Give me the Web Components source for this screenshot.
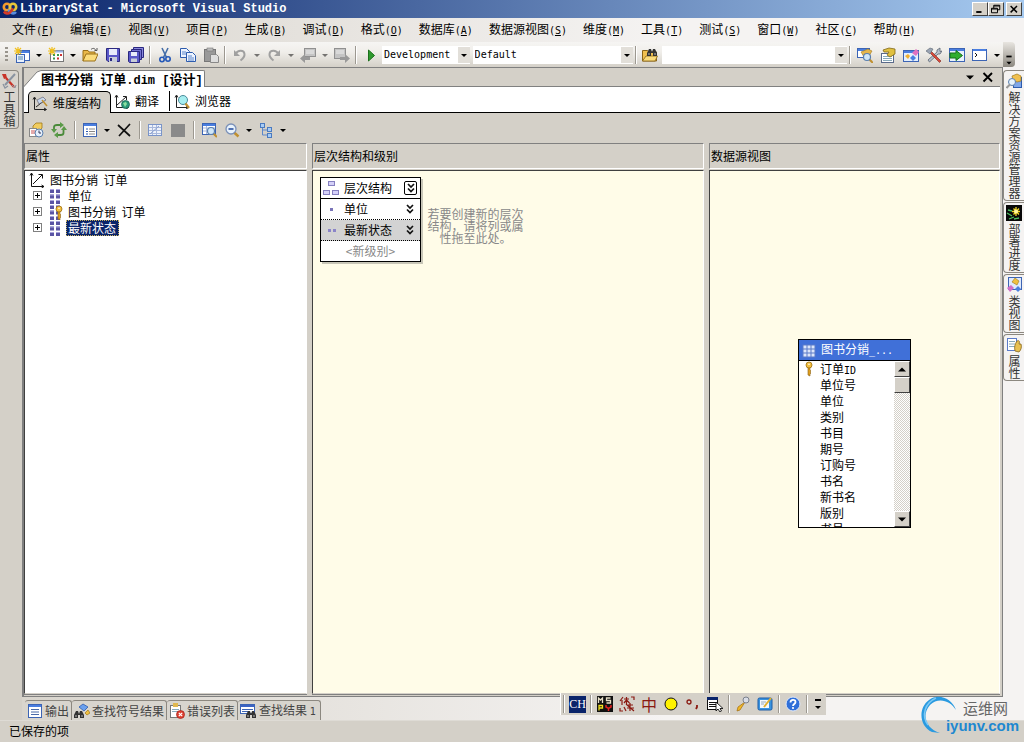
<!DOCTYPE html>
<html lang="zh-CN">
<head>
<meta charset="utf-8">
<title>LibraryStat - Microsoft Visual Studio</title>
<style>
html, body { margin: 0; height: 100%; }
body { font: 12px/16px "Noto Sans CJK SC", sans-serif; color: #000; overflow: hidden; }
</style>
</head>
<body>
<vs-app></vs-app>
<script>
const BASE = `
*{box-sizing:border-box}
[hidden]{display:none}
button,select,input{font:inherit;color:inherit;border:0;padding:0;margin:0;background:none;border-radius:0;outline:0}
a{color:inherit;text-decoration:none}
ul,h1,h2,p{margin:0;padding:0;font:inherit;list-style:none}
.l{font-family:"DejaVu Sans Mono",monospace;font-size:10px}
vs-icon{flex:none}`;

function define(name, css, html, after) {
  const tpl = document.createElement('template');
  tpl.innerHTML = `<style>${BASE}${css}</style>${html}`;
  customElements.define(name, class extends HTMLElement {
    connectedCallback() {
      if (this.shadowRoot) return;
      const root = this.attachShadow({ mode: 'open' });
      root.append(tpl.content.cloneNode(true));
      if (after) after(this, root);
    }
  });
}

const squares = (c) => [1, 6.5, 12].map(y => [3, 9].map(x =>
  `<rect x="${x}" y="${y}" width="4" height="4" fill="${c}"/><path d="M${x} ${y + .5}h4" stroke="#a9a4dc"/>`).join('')).join('');
const axes = '<path d="M2.500 3v11.500H14M1 4.500 2.500 2 4 4.500M12 13l2.500 1.500L12 16" fill="none" stroke="#222"/>';
const sun = '<path d="M4 0v8M0 4h8M1 1l6 6M7 1 1 7" stroke="#f0c020" stroke-width="1.200"/>';
const lens = (x, y, f = '#cfe6f8') => `<path d="M${x + 2.500} ${y + 2.500}l3.500 3.500" stroke="#c09030" stroke-width="2.200"/><circle cx="${x}" cy="${y}" r="3.500" fill="${f}" stroke="#5a7fae" stroke-width="1.200"/>`;
const binoc = (x, y) => `<path d="M${x} ${y + 7}v-3l2-4h2l1 3 1-3h2l2 4v3h-4v-3h-2v3z" fill="#333"/><path d="M${x + 1} ${y + 5}h2M${x + 7} ${y + 5}h2" stroke="#bbb"/>`;
const win = (x, y, w, h) => `<rect x="${x + .5}" y="${y + .5}" width="${w}" height="${h}" fill="#fff" stroke="#3c64b4"/><rect x="${x + 1}" y="${y + 1}" width="${w - 1}" height="2" fill="#4a7ee0"/>`;
const key = (x, y) => `<path d="M${x} ${y + 3}v9l2 1v-2l1-1-1-1 1-1-1-1v-3z" fill="#e0a020" stroke="#8a6010" stroke-width=".6"/><circle cx="${x + 1}" cy="${y + 2}" r="3" fill="#f2c040" stroke="#a07010" stroke-width=".8"/><circle cx="${x + 1}" cy="${y + 1.300}" r=".8" fill="#fff"/>`;

const ICONS = {
  logo: '<circle cx="5" cy="6" r="3.200" fill="none" stroke="#f39a2d" stroke-width="2.600"/><circle cx="11" cy="6" r="3.200" fill="none" stroke="#e8c63a" stroke-width="2.600"/><path d="M7 8.500a4 4 0 0 0 7 2.500" fill="none" stroke="#5a8de0" stroke-width="2.600"/><path d="M2 10.500a4 4 0 0 0 6 1l3-4" fill="none" stroke="#d43a2a" stroke-width="2.600"/>',
  newproject: win(4, 3, 11, 10) + '<rect x="2.500" y="7.500" width="8" height="8" fill="#e8f0fc" stroke="#3c64b4"/><path d="M4 10h5M4 12h5" stroke="#58a"/>' + sun,
  newitem: '<rect x="2.500" y="3.500" width="13" height="11" fill="#fff" stroke="#777"/><path d="M3 4.500h12" stroke="#9ab4e8" stroke-width="2"/><path d="M5 8h2M9 8h2M5 11.500h2" stroke="#3a9a4a" stroke-width="2"/><path d="M12 8h2M9 11.500h2" stroke="#c33" stroke-width="2"/>' + sun,
  open: '<path d="M1 14V3.500h5l1 1.500h6V7" fill="#e9b84a" stroke="#9a7018"/><path d="M1 14 4 7h12l-3 7z" fill="#fbdc7c" stroke="#9a7018"/><path d="M9 2.500c2-2 4-1 5 1M12.500 3.500H15V1" fill="none" stroke="#555"/>',
  save: '<path d="M1.500 1.500h13v13H3L1.500 13z" fill="#5a58c8" stroke="#2a2880"/><rect x="4" y="2" width="8" height="6" fill="#e8ecfa"/><rect x="4" y="10" width="8" height="5" fill="#c8cdd8"/><rect x="5" y="11" width="2" height="3" fill="#2a2880"/>',
  saveall: '<path d="M5.500 .5h10v10h-10z" fill="#8a88dc" stroke="#2a2880"/><path d="M3.500 2.500h10v10h-10z" fill="#7472d2" stroke="#2a2880"/><path d="M.5 4.500h11v11H1.500l-1-1z" fill="#5a58c8" stroke="#2a2880"/><rect x="3" y="5" width="6" height="4" fill="#e8ecfa"/><rect x="3" y="11.500" width="6" height="3.500" fill="#c8cdd8"/>',
  cut: '<path d="M5 1l4.500 9.500M11 1 6.500 10.500" stroke="#456ea8" stroke-width="1.600"/><circle cx="5" cy="12.500" r="2.200" fill="none" stroke="#2458b8" stroke-width="1.600"/><circle cx="11" cy="12" r="2.200" fill="none" stroke="#2458b8" stroke-width="1.600"/>',
  copy: '<path d="M.5 1.500h6l3 3v6h-9z" fill="#eef4ff" stroke="#2d5cae"/><path d="M2 5h4M2 7h4" stroke="#5a86cc"/><path d="M6.500 5.500h6l3 3v6h-9z" fill="#eef4ff" stroke="#2d5cae"/><path d="M8 9h4M8 11h6M8 13h6" stroke="#5a86cc"/>',
  paste: '<rect x="1.500" y="2.500" width="11" height="12" fill="#999" stroke="#777"/><rect x="4" y="1" width="6" height="3" fill="#bbb" stroke="#777" stroke-width=".6"/><path d="M7.500 7.500h6l2 2v6h-8z" fill="#ddd" stroke="#888"/>',
  undo: '<path d="M3.500 7C6 2.500 12 3 12.500 7c.3 3-2 5-4 6.500" fill="none" stroke="#a0a0a0" stroke-width="2"/><path d="M2 3v6h6z" fill="#a0a0a0"/>',
  redo: '<path d="M12.500 7C10 2.500 4 3 3.500 7c-.3 3 2 5 4 6.500" fill="none" stroke="#a0a0a0" stroke-width="2"/><path d="M14 3v6H8z" fill="#a0a0a0"/>',
  navback: '<rect x="4.500" y="1.500" width="11" height="8" fill="#c4c4c4" stroke="#909090"/><path d="M6 4h8M6 6h8" stroke="#eee"/><path d="M0 11.500 5 7v3h5v3H5v3z" fill="#999"/>',
  navfwd: '<rect x=".5" y="1.500" width="11" height="10" fill="#c4c4c4" stroke="#909090"/><path d="M2 4h8M2 6h8" stroke="#eee"/><path d="M16 11.500 11 7v3H6v3h5v3z" fill="#999"/>',
  play: '<path d="M5.500 3v11l6-5.500z" fill="#2f9a2f" stroke="#1c701c"/>',
  findfile: '<path d="M.5 14V3.500h5L7 5h7.500v9z" fill="#f0c050" stroke="#8a6418"/>' + '<path d="M.5 14 4 9h11.500L13 14z" fill="#fbdc7c" stroke="#8a6418" stroke-width=".8"/>' + binoc(5, 2),
  solexp: win(0, 1, 12, 9) + '<path d="M4 5l7-3 4 2-3 5-5 1z" fill="#e6b64c" stroke="#a17a20" stroke-width=".6"/>' + lens(10, 10),
  props: '<rect x="1.500" y="6.500" width="12" height="9" fill="#fff" stroke="#5a6a8a"/><path d="M3 9.500h9M3 11.500h9M3 13.500h9" stroke="#8ab"/><path d="M3 3l6-2 6 1v5l-5 3-3-2 2-3H4z" fill="#e0c040" stroke="#806818" stroke-width=".8"/>',
  objbrowser: '<rect x=".5" y="3.500" width="15" height="11" fill="#e4effc" stroke="#3c64b4"/><rect x="1" y="4" width="14" height="2" fill="#4a7ee0"/><path d="M2 9l3-2 2 2-2 3z" fill="#f0b030"/><path d="M9 6l4-4 3 3-3 4z" fill="#e070c0"/><path d="M7 11l3-3 3 3-3 3z" fill="#4a80e0"/>',
  tools: '<path d="M14 1l-3 2v2l-9 8 1.500 2L12 7h2l2-3-2 .5z" fill="#b8c0cc" stroke="#5a6472" stroke-width=".8"/><path d="M5 4l10 10-1.500 1.500L4 6z" fill="#d8483a" stroke="#7a2820" stroke-width=".6"/><path d="M0 4l4-3 3 1-3 5z" fill="#9aa4b4" stroke="#5a6472" stroke-width=".6"/>',
  start: '<rect x=".5" y="1.500" width="15" height="13" fill="#eaf2fc" stroke="#3c64b4"/><rect x="1" y="2" width="14" height="2" fill="#4a7ee0"/><path d="M1 6h6V3.500l6.500 5L7 13.500V11H1z" fill="#2fae2f" stroke="#14701a"/>',
  command: '<rect x=".5" y="2.500" width="14" height="11" fill="#fff" stroke="#3c64b4"/><path d="M1 3h13" stroke="#4a7ee0" stroke-width="2"/><path d="M3 6l2 2-2 2" fill="none" stroke="#111"/>',
  dim: axes + '<path d="M4 12 13 5" stroke="#222"/><path d="M5 5l6-3 3 3-7 4z" fill="#c9d8ee" stroke="#667" stroke-width=".7"/><path d="M10 5l5 6" stroke="#c09030" stroke-width="1.500"/>',
  trans: axes + '<path d="M3 12l9-8M9 3.500h3.500V7" fill="none" stroke="#222"/><circle cx="11.500" cy="11.500" r="4" fill="#2a9a7a" stroke="#145a4a" stroke-width=".7"/><path d="M9 10l3-1 1 2-2 3z" fill="#8ce0a0"/>',
  browse: axes + '<circle cx="9" cy="7" r="4.500" fill="#a6eef0" stroke="#4a8a9a"/><path d="M11.500 10.500 15 15" stroke="#c09030" stroke-width="2.200"/>',
  process: '<path d="M5 4l3-3h6v5l-2 2H5z" fill="#f0cc60" stroke="#a07818" stroke-width=".8"/><rect x="1.500" y="6.500" width="7" height="8" fill="#fff" stroke="#888"/><path d="M3 9h4M3 11h4" stroke="#c55"/><circle cx="11" cy="11" r="4" fill="#e6effb" stroke="#5a7fae"/><path d="M11 8.500V11h2" fill="none" stroke="#335"/>',
  refresh: '<path d="M3 8V5q0-2 3-2h4M12.500 7v4q0 2-3 2H6" fill="none" stroke="#4a8a3a" stroke-width="1.800"/><path d="M9 0l4 3-4 3zM7 10l-4 3 4 3zM0 7h6L3 11zM10 8h6l-3-4z" fill="#5a9a48"/>',
  view: '<rect x="1.500" y="1.500" width="13" height="13" fill="#fff" stroke="#3c64b4"/><rect x="2" y="2" width="12" height="2" fill="#4a7ee0"/><path d="M4 7h2M4 9.500h2M4 12h2" stroke="#2a58b0"/><path d="M7 7h6M7 9.500h6M7 12h6" stroke="#888"/>',
  delete: '<path d="M2 3l12 11M14 2 3 14" stroke="#111" stroke-width="1.700"/>',
  grid: '<rect x="1.500" y="2.500" width="13" height="11" fill="#eef2fa" stroke="#7a94c8"/><path d="M2 5.500h12M2 8.500h12M2 11.500h12M5.500 3v10M9.500 3v10" stroke="#a8b8dc"/><path d="M3 12l9-8" stroke="#8aa0d0"/>',
  block: '<rect x="1" y="2" width="14" height="13" fill="#8a8a8a"/>',
  findtable: win(1, 1, 13, 11) + '<path d="M2 6h12M2 9h12M5.500 4v8" stroke="#a8b8dc"/>' + lens(10, 9),
  zoom: '<path d="M9.500 10l5 4.500" stroke="#c09030" stroke-width="2.500"/><circle cx="7" cy="7" r="5" fill="#e8f2fc" stroke="#7a90b8" stroke-width="1.300"/><path d="M4.500 7h5" stroke="#2a50a0" stroke-width="1.600"/>',
  layout: '<path d="M4.500 5v8H9M4.500 8H9" fill="none" stroke="#5a86cc"/><rect x="2.500" y="1.500" width="4" height="4" fill="#a8ccf4" stroke="#4a7ac0"/><rect x="9.500" y="5.500" width="4" height="4" fill="#a8ccf4" stroke="#4a7ac0"/><rect x="9.500" y="11.500" width="4" height="4" fill="#a8ccf4" stroke="#4a7ac0"/>',
  attr: squares('#5a54a4'),
  keyattr: squares('#5a54a4') + key(11, 3),
  key: key(7, 2),
  root: '<path d="M2.500 1v13.500H15M1 3.500 2.500 1 4 3.500M12.500 13 15 14.500 12.500 16M4 12l9-9M9.500 2.500h4v4" fill="none" stroke="#111"/>',
  hier: '<g fill="#d4d0f8" stroke="#8680c0"><rect x="5.500" y="1.500" width="6" height="4"/><rect x=".5" y="10.500" width="6" height="4"/><rect x="9.500" y="10.500" width="6" height="4"/></g>',
  dot1: '<rect x="7" y="7" width="3" height="3" fill="#7a74b8"/>',
  dot2: '<path d="M5 7h3v3H5zM10 7h3v3h-3z" fill="#8a84c8"/>',
  chev: '<path d="M5 4l3 3 3-3M5 8.500l3 3 3-3" fill="none" stroke="#111" stroke-width="1.700"/>',
  table: '<rect x="2" y="3" width="12" height="12" fill="#dce6fa" stroke="#5a7ac8"/><path d="M2 7h12M2 11h12M6 3v12M10 3v12" stroke="#5a7ac8"/>',
  toolbox: '<path d="M5 5l8 9" stroke="#c83428" stroke-width="2.200"/><path d="M14 1 4 12" stroke="#8a93a0" stroke-width="2"/><path d="M1 1l4 0 1 4-3 1z" fill="#c83428"/><path d="M2 11l2 4 3-2" fill="none" stroke="#8a93a0" stroke-width="1.300"/><path d="M11 12l3 3 1-3" fill="none" stroke="#8a93a0"/>',
  sol: '<rect x="7.500" y="4.500" width="8" height="10" fill="#7fa6ea" stroke="#2d5cae"/><path d="M6 3l5-2 4 2v5l-4 1-4-2z" fill="#f0c050" stroke="#a07818" stroke-width=".7"/><circle cx="6" cy="9" r="3.500" fill="#e6f2fc" stroke="#5a7fae"/><path d="M4 11.500.5 15" stroke="#999" stroke-width="2"/>',
  deploy: '<rect width="16" height="16" fill="#080808"/><path d="M10 2v9M6 6.500h8M7.500 3.500l5.500 6M13 3.500l-5.500 6" stroke="#f4d820" stroke-width="1.300"/><circle cx="10" cy="6.500" r="2" fill="#fff8a0"/><path d="M2 5l4 1M1 8l5 3M3 14l5-2M8 14l5-1" stroke="#4ac060" stroke-width="1.300"/>',
  classview: '<rect x="2.500" y=".5" width="13" height="12" fill="#dfeafc" stroke="#3c64b4"/><path d="M6 5l3-4 4 3-2 4z" fill="#f0c040" stroke="#a07818" stroke-width=".6"/><path d="M1 11l4-3 3 3-4 4z" fill="#d070c8"/><path d="M9 12l3-3 3 3-3 3z" fill="#4a80e0"/>',
  propside: '<rect x="1.500" y="1.500" width="9" height="12" fill="#fff" stroke="#5a7ac8"/><path d="M3 4.500h6M3 7h6M3 9.500h6" stroke="#8ab"/><path d="M9 14c-1-4 0-7 2-10 2-1 3 0 2 3h2c1 3 0 6-2 8z" fill="#e8c050" stroke="#86661a" stroke-width=".8"/>',
  output: '<rect x="1.500" y="1.500" width="13" height="13" fill="#fff" stroke="#3c64b4"/><rect x="2" y="2" width="12" height="2" fill="#4a7ee0"/><path d="M4 6.500h8M4 9h8M4 11.500h8" stroke="#4a6aa8"/>',
  findsym: '<path d="M5 4l4-3 5 3-4 4z" fill="#6aa0ee" stroke="#2d5cae" stroke-width=".8"/><path d="M11 10l3-3 2 3-3 2z" fill="#f0c040" stroke="#a07818" stroke-width=".7"/>' + binoc(0, 8),
  errors: '<rect x="1.500" y="2.500" width="10" height="12" fill="#fff" stroke="#777"/><rect x="4" y="0" width="5" height="4" fill="#e0b850"/><path d="M3 6.500h7M3 8.500h7" stroke="#8ab"/><circle cx="11.500" cy="11.500" r="4" fill="#e04030" stroke="#a02018" stroke-width=".7"/><path d="M9.800 9.800l3.400 3.400M13.200 9.800l-3.400 3.400" stroke="#fff" stroke-width="1.200"/>',
  findres: '<rect x=".5" y="1.500" width="14" height="9" fill="#fff" stroke="#3c64b4"/><rect x="1" y="2" width="13" height="2" fill="#3c64c4"/><path d="M2 6.500h11M2 8.500h7" stroke="#3c64b4"/>' + binoc(6, 8),
  mspy: '<rect width="16" height="16" fill="#111"/><path d="M1.500 7V2l2 2 2-2v5M13.500 2H9.500v2.500h4V7h-4" fill="none" stroke="#e8e0c8" stroke-width="1.300"/><path d="M2 14.500V9.500h3.500V12H2" fill="none" stroke="#f0e020" stroke-width="1.300"/><path d="M9 9v2l2.500 1.500L14 11V9M11.500 12v3" fill="none" stroke="#e02020" stroke-width="1.500"/>',
  trad: '<path d="M4 1 1 5M3 4v5M5 3h5M7.500 1v7M7.500 4 5 7M7.500 4l3 3M7 8l8 7M9 9h5M11 7v8M8 12h7M5 11l2 4M12 1h3v3M1 12v3h3" fill="none" stroke="#8a1a12" stroke-width="1.200"/>',
  moon: '<circle cx="8" cy="8" r="6" fill="#fff200" stroke="#111"/>',
  punct: '<circle cx="4" cy="6" r="2" fill="none" stroke="#8a1a12" stroke-width="1.300"/><path d="M12 9v2l-1 2" fill="none" stroke="#8a1a12" stroke-width="1.800"/>',
  imemenu: '<rect x=".5" y="1.500" width="10" height="12" fill="#fff" stroke="#111"/><rect x="0" y="1" width="11" height="3" fill="#0a246a"/><path d="M2 6.500h7M2 8.500h7M2 10.500h7" stroke="#111"/><path d="M9 6v9l2-2 2 3 1.500-1L13 12.500h3z" fill="#fff" stroke="#111" stroke-width=".9"/>',
  mic: '<path d="M10 6l-5 8-3 1 1-4z" fill="#f0b828" stroke="#a06c10" stroke-width=".7"/><circle cx="11" cy="4" r="3" fill="#d8dce6" stroke="#7a808c"/>',
  pad: '<rect x="1" y="2" width="14" height="12" rx="1.500" fill="#3a94e0" stroke="#1c5ca8"/><rect x="3" y="4" width="9" height="8" fill="#f4f8fc"/><path d="M4 6h5M4 8h3" stroke="#9ab"/><path d="M14 2 7 11" stroke="#e0b030" stroke-width="2"/>',
  help: '<circle cx="8" cy="8" r="7" fill="#2f6fd8" stroke="#dfe8f8"/><path d="M5.500 6.500C5.500 3 10.500 3 10.500 6c0 2-2.500 2-2.500 4" fill="none" stroke="#fff" stroke-width="1.800"/><circle cx="8" cy="12" r="1.100" fill="#fff"/>',
  min: '<path d="M3 12h7" stroke="#000" stroke-width="2.500"/>',
  restore: '<path d="M5 3h8v6h-8zM5 4h8" fill="none" stroke="#000" stroke-width="1.300"/><path d="M2 7h8v6H2zM2 8h8" fill="#d4d0c8" stroke="#000" stroke-width="1.300"/>',
  close: '<path d="M3.500 4l8.500 8.500M12 4 3.500 12.500" stroke="#000" stroke-width="1.900"/>',
  down: '<path d="M4 6.500h8l-4 4z" fill="#000"/>',
  up: '<path d="M4 10.500h8l-4-4z" fill="#000"/>',
  more: '<path d="M5 4h6" stroke="#000" stroke-width="2"/><path d="M5 10h6l-3 3z" fill="#000"/>',
  plus: '<rect x="3.500" y="3.500" width="8" height="8" fill="#fff" stroke="#808080"/><path d="M5 7.500h5M7.500 5v5" stroke="#000"/>'
};

define('vs-icon', ':host{display:block;width:16px;height:16px}svg{display:block;width:100%;height:100%}', '<svg viewBox="0 0 16 16" aria-hidden="true"></svg>',
  (el, r) => { r.querySelector('svg').innerHTML = ICONS[el.getAttribute('name')] || ''; });

define('vs-tool', `:host{display:block;flex:none}button{display:flex;align-items:center;justify-content:center;width:23px;height:22px}
:host([arrow]) button{width:11px}:host([arrow]) vs-icon{width:12px;height:12px}:host([dim]) vs-icon{opacity:.5}`,
  '<button type="button"><vs-icon></vs-icon></button>', (el, r) => {
    const icon = document.createElement('vs-icon');
    icon.setAttribute('name', el.hasAttribute('arrow') ? 'down' : el.getAttribute('name'));
    r.querySelector('vs-icon').replaceWith(icon);
    r.querySelector('button').setAttribute('aria-label', el.getAttribute('label') || '更多');
  });

define('vs-sep', ':host{display:block;flex:none;width:6px;height:18px;padding-left:2px}i{display:block;width:2px;height:100%;background:#9c9890;border-right:1px solid #fff}', '<i></i>');

define('vs-combo', `:host{display:grid;grid-template-columns:minmax(0,1fr) 12px;height:18px;background:#fff;min-width:0}
select{grid-area:1/1/2/3;appearance:none;width:100%;height:18px;padding-left:2px;font:10px/18px "DejaVu Sans Mono",monospace}
span{grid-area:1/2;pointer-events:none;background:#e2dfd9;margin:1px 0;display:flex;align-items:center;justify-content:center;z-index:1}
vs-icon{width:12px;height:12px}`,
  '<select><option></option></select><span><vs-icon name="down"></vs-icon></span>', (el, r) => {
    r.querySelector('option').textContent = el.getAttribute('value') || '';
    r.querySelector('select').setAttribute('aria-label', el.getAttribute('label'));
  });

define('vs-title', `:host{display:flex;align-items:center;height:18px;padding:0 2px;background:linear-gradient(90deg,#0a246a,#a6caf0);color:#fff}
h1{flex:1;min-width:0;padding-left:2px;font:bold 12px/16px "Liberation Mono",monospace;white-space:nowrap}
button{width:16px;height:14px;background:#d4d0c8;border:1px solid;border-color:#fff #404040 #404040 #fff;display:flex;align-items:center;justify-content:center}
button vs-icon{width:12px;height:12px}button:last-child{margin-left:2px}`,
  '<vs-icon name="logo"></vs-icon><h1>LibraryStat - Microsoft Visual Studio</h1><button type="button" aria-label="最小化"><vs-icon name="min"></vs-icon></button><button type="button" aria-label="还原"><vs-icon name="restore"></vs-icon></button><button type="button" aria-label="关闭"><vs-icon name="close"></vs-icon></button>');

const MENUS = [['文件', 'F'], ['编辑', 'E'], ['视图', 'V'], ['项目', 'P'], ['生成', 'B'], ['调试', 'D'], ['格式', 'O'], ['数据库', 'A'], ['数据源视图', 'S'], ['维度', 'M'], ['工具', 'T'], ['测试', 'S'], ['窗口', 'W'], ['社区', 'C'], ['帮助', 'H']];
define('vs-menu', ':host{display:flex;height:24px;padding-left:4px}button{height:24px;padding:0 8px;white-space:nowrap;flex:none}',
  MENUS.map(([t, k]) => `<button type="button">${t}<span class="l">(<u>${k}</u>)</span></button>`).join(''));

const t = (name, label) => `<vs-tool name="${name}" label="${label}"></vs-tool>`;
const ar = '<vs-tool arrow></vs-tool>', sep = '<vs-sep></vs-sep>';
define('vs-toolbar', `:host{display:flex;align-items:center;height:25px;margin-right:9px;padding-left:5px;border-radius:0 4px 4px 0;background:linear-gradient(#f6f5f3,#f0eeea 40%,#d4d0c8)}
.grip{width:3px;height:16px;margin-right:2px;flex:none;background:repeating-linear-gradient(#98948c 0 2px,transparent 2px 4px)}
.a{flex:87 1 0}.b{flex:159 1 0;margin-left:3px}.c{flex:184 1 0}
.end{align-self:stretch;width:12px;flex:none;margin-left:1px;background:linear-gradient(#e8e5e0,#8c8880);border-radius:0 4px 4px 0;display:flex;align-items:flex-end;justify-content:center}
.end vs-icon{width:14px;height:14px}`,
  '<span class="grip"></span>' + t('newproject', '新建项目') + ar + t('newitem', '添加新项') + ar + t('open', '打开') + t('save', '保存') + t('saveall', '全部保存') + sep +
  t('cut', '剪切') + t('copy', '复制') + t('paste', '粘贴') + sep + t('undo', '撤消') + '<vs-tool arrow dim></vs-tool>' + t('redo', '重做') + '<vs-tool arrow dim></vs-tool>' + t('navback', '向后定位') + '<vs-tool arrow dim></vs-tool>' + t('navfwd', '向前定位') + sep + t('play', '启动') +
  '<vs-combo class="a" value="Development" label="解决方案配置"></vs-combo><vs-combo class="b" value="Default" label="解决方案平台"></vs-combo>' + sep + t('findfile', '在文件中查找') + '<vs-combo class="c" label="查找"></vs-combo>' + sep +
  t('solexp', '解决方案资源管理器') + t('props', '属性窗口') + t('objbrowser', '对象浏览器') + t('tools', '工具箱') + t('start', '起始页') + t('command', '命令窗口') + ar +
  '<button type="button" class="end" aria-label="工具栏选项"><vs-icon name="more"></vs-icon></button>');

define('vs-side-tab', `:host{display:block}button{display:flex;flex-direction:column;align-items:center;gap:2px;width:100%;padding:2px 0 1px;border:1px solid #8c8880;white-space:nowrap}
:host([side=left]) button{border-left:0;border-radius:0 4px 4px 0;background:#d8d4cd}
:host([side=right]) button{border-right:0;border-radius:4px 0 0 4px}
span{writing-mode:vertical-rl;line-height:16px;color:#333}`,
  '<button type="button"><span><slot></slot></span></button>', (el, r) => {
    const i = document.createElement('vs-icon'); i.setAttribute('name', el.getAttribute('icon'));
    r.querySelector('button').prepend(i);
  });

define('vs-doc-header', `:host{display:flex;height:19px;border-bottom:1px solid #808080;background:#d4d0c8;align-items:center}
.tab{display:flex;align-self:flex-end;height:17px;margin-bottom:-1px}
svg{width:17px;height:17px;display:block}
button.t{height:17px;background:#fff;border:1px solid #808080;border-width:1px 1px 0 0;border-radius:0 2px 0 0;padding-right:1px;font-weight:bold;font-size:13px;line-height:15px;white-space:nowrap}
.m{font-family:"Liberation Mono",monospace;font-size:12px;white-space:pre}
i{flex:1}.x{width:18px;height:16px;display:grid;place-items:center}.x:last-child{margin-right:3px}`,
  `<div class="tab"><svg viewBox="0 0 17 17" aria-hidden="true"><path d="M0 17 13 2 17 .5V17z" fill="#fff"/><path d="M0 16.500 13 2 17 .5" fill="none" stroke="#808080"/></svg><button type="button" class="t">图书分销<span class="m"> </span>订单<span class="m">.dim [</span>设计<span class="m">]</span></button></div><i></i>
<button type="button" class="x" aria-label="活动文件"><vs-icon name="down"></vs-icon></button><button type="button" class="x" aria-label="关闭文档"><vs-icon name="close"></vs-icon></button>`);

define('vs-designer-tabs', `:host{display:flex;align-items:flex-end;height:26px;padding-left:4px;background:#fff;border-bottom:1px solid #000}
button{display:flex;align-items:center;gap:5px;height:22px;padding:0 10px 0 3px;white-space:nowrap}
.on{background:#d4d0c8;border:1px solid #000;border-bottom:0;border-radius:5px 5px 0 0;margin-bottom:-1px;height:22px;padding:0 9px 0 3px}
.sep{border-left:1px solid #000;height:20px;margin-bottom:1px;padding-left:4px}`,
  '<button type="button" class="on"><vs-icon name="dim"></vs-icon>维度结构</button><button type="button"><vs-icon name="trans"></vs-icon>翻译</button><button type="button" class="sep"><vs-icon name="browse"></vs-icon>浏览器</button>');

define('vs-designer-bar', ':host{display:flex;align-items:center;height:30px;padding-top:3px;background:#d4d0c8}.g{margin-left:2px}',
  t('process', '处理') + t('refresh', '刷新') + '<vs-sep class="g"></vs-sep>' + t('view', '查看') + ar + t('delete', '删除') + '<vs-sep class="g"></vs-sep>' + t('grid', '显示表') + t('block', '停止') + '<vs-sep class="g"></vs-sep>' + t('findtable', '查找表') + t('zoom', '缩放') + ar + t('layout', '布局') + ar);

define('vs-panel', `:host{display:flex;flex-direction:column;min-width:0}
h2{height:26px;padding:4px 1px 0;border:1px solid #808080;border-color:#808080 #fff #fff #808080;background:#d4d0c8;white-space:nowrap}
.body{flex:1;min-height:0;position:relative;overflow:hidden;border:1px solid;border-color:#404040 #fff #d4d0c8 #404040;background:var(--fill,#fff);box-shadow:0 1px #808080;margin-top:1px}`,
  '<h2></h2><div class="body"><slot></slot></div>', (el, r) => { r.querySelector('h2').textContent = el.getAttribute('heading'); });

define('vs-tree', `:host{display:block}ul{padding-top:1px}li{display:flex;align-items:center;height:16px;white-space:nowrap}
.root{padding-left:4px}.root a{margin-left:5px}.kid{padding-left:4px}.kid vs-icon{margin-left:1px}.kid button{display:block}.kid a{margin-left:3px;padding:0 3px 0 2px}
.sel{background:#0a246a;color:#fff;outline:1px dotted #c8b060;outline-offset:-1px}`,
  `<ul><li class="root"><vs-icon name="root"></vs-icon><a href="#">图书分销 &nbsp;订单</a></li>
<li class="kid"><button type="button" aria-label="展开"><vs-icon name="plus"></vs-icon></button><vs-icon name="attr"></vs-icon><a href="#">单位</a></li>
<li class="kid"><button type="button" aria-label="展开"><vs-icon name="plus"></vs-icon></button><vs-icon name="keyattr"></vs-icon><a href="#">图书分销 &nbsp;订单</a></li>
<li class="kid"><button type="button" aria-label="展开"><vs-icon name="plus"></vs-icon></button><vs-icon name="attr"></vs-icon><a href="#" class="sel">最新状态</a></li></ul>`);

define('vs-hierarchy', `:host{display:flex;align-items:center;gap:6px;padding:6px 7px}
.box{width:101px;flex:none;background:#fff;border:1px solid #000;box-shadow:2px 2px #c8c6b8}
.row{display:flex;align-items:center;height:21px;padding:0 2px;gap:5px;border-bottom:1px dotted #000;white-space:nowrap}
.row span{flex:1}.head{border-bottom-style:solid}.sel{background:#d3d3d3}
.row:last-child{height:20px;border:0;color:#888;justify-content:center}.row:last-child span{flex:none}
button{width:16px;height:16px;display:flex;align-items:center;justify-content:center}.head button{width:13px;height:14px;border:1px solid #000;border-radius:2px;margin-right:1px}
p{width:97px;font-size:12px;line-height:12px;color:#888;text-align:center;padding-top:12px}`,
  `<div class="box"><div class="row head"><vs-icon name="hier"></vs-icon><span>层次结构</span><button type="button" aria-label="折叠"><vs-icon name="chev"></vs-icon></button></div>
<div class="row"><vs-icon name="dot1"></vs-icon><span>单位</span><button type="button" aria-label="折叠"><vs-icon name="chev"></vs-icon></button></div>
<div class="row sel"><vs-icon name="dot2"></vs-icon><span>最新状态</span><button type="button" aria-label="折叠"><vs-icon name="chev"></vs-icon></button></div>
<div class="row"><span>&lt;新级别&gt;</span></div></div><p>若要创建新的层次结构，请将列或属性拖至此处。</p>`);

define('vs-source-table', `:host{display:block;position:absolute;top:168px;right:88px;width:113px;border:1px solid #000;background:#fff}
h2{display:flex;align-items:center;gap:4px;height:21px;padding:0 2px;background:#4070d8;color:#fff;border-bottom:1px solid #000;white-space:nowrap}
.rows{display:flex;height:166px}ul{flex:1;overflow:hidden}li{height:16px;padding-left:21px;white-space:nowrap}li:first-child{display:flex;padding-left:2px;gap:3px}
.bar{width:16px;flex:none;display:flex;flex-direction:column;background:repeating-conic-gradient(#d4d0c8 0 25%,#fff 0 50%) 0 0/2px 2px}
.bar button{height:16px;width:16px;background:#d4d0c8;border:1px solid;border-color:#fff #404040 #404040 #fff;display:flex;align-items:center;justify-content:center}.bar i{flex:1}`,
  `<h2><vs-icon name="table"></vs-icon><span>图书分销<span class="l">_...</span></span></h2><div class="rows"><ul><li><vs-icon name="key"></vs-icon><span>订单<span class="l">ID</span></span></li>${['单位号', '单位', '类别', '书目', '期号', '订购号', '书名', '新书名', '版别', '书号'].map(s => `<li>${s}</li>`).join('')}</ul>
<div class="bar"><button type="button" aria-label="向上滚动"><vs-icon name="up"></vs-icon></button><button type="button" aria-label="滚动块"></button><i></i><button type="button" aria-label="向下滚动"><vs-icon name="down"></vs-icon></button></div></div>`);

define('vs-bottom-tabs', `:host{display:flex;height:20px;padding-left:3px}
button{display:flex;align-items:center;gap:2px;height:20px;padding:0 2px;border:1px solid #8c8880;border-bottom:0;border-left-width:0;border-radius:3px 3px 0 0;background:#d8d5ce;color:#444;white-space:nowrap}
button:first-child{border-left-width:1px}button:last-child{padding-right:4px;gap:3px}`,
  [['output', '输出'], ['findsym', '查找符号结果'], ['errors', '错误列表'], ['findres', '查找结果 <span class="l">1</span>']].map(([i, s]) => `<button type="button"><vs-icon name="${i}"></vs-icon><span>${s}</span></button>`).join(''));

define('vs-ime-bar', `:host{position:absolute;z-index:2;right:198px;bottom:27px;display:flex;align-items:center;height:22px;background:#d4d0c8;border-left:1px solid #fff}
button{width:22px;height:22px;display:grid;place-items:center;color:#8a1a12}
.ch{width:17px;height:17px;margin:0 2px;background:#0a246a;color:#fff;font:12px/16px "Liberation Serif",serif}
.zh{font-size:16px}.n{width:16px}`,
  `<vs-sep></vs-sep><button type="button" class="ch">CH</button>${sep}<button type="button" aria-label="微软拼音"><vs-icon name="mspy"></vs-icon></button><button type="button" aria-label="简繁"><vs-icon name="trad"></vs-icon></button><button type="button" class="zh">中</button><button type="button" aria-label="全半角"><vs-icon name="moon"></vs-icon></button><button type="button" aria-label="标点"><vs-icon name="punct"></vs-icon></button><button type="button" aria-label="功能菜单"><vs-icon name="imemenu"></vs-icon></button>${sep}<button type="button" aria-label="语音"><vs-icon name="mic"></vs-icon></button><button type="button" aria-label="手写"><vs-icon name="pad"></vs-icon></button>${sep}<button type="button" aria-label="帮助"><vs-icon name="help"></vs-icon></button>${sep}<button type="button" class="n" aria-label="选项"><vs-icon name="more"></vs-icon></button>`);

define('vs-watermark', `:host{position:absolute;z-index:3;right:5px;bottom:6px;display:block;width:99px;height:41px}
svg{position:absolute;left:0;top:0}.a,.b{display:block;text-align:right;white-space:nowrap}
.a{font-size:15px;line-height:18px;padding:4px 11px 0 0;color:#666}.b{font:bold 15px/18px "Liberation Sans",sans-serif;color:#1e88d0}`,
  `<svg width="40" height="40" viewBox="0 0 40 40" aria-hidden="true"><path d="M36 15C32 3 18-2 9 5-2 13-1 31 12 37l8 1C6 34 1 20 10 10c8-8 20-5 26 5z" fill="#2a9ae0"/><path d="M8 30C1 20 5 8 16 3" fill="none" stroke="#7cc8f4" stroke-width="1.500"/></svg><span class="a">运维网</span><span class="b">iyunv.com</span>`);

define('vs-app', `:host{display:flex;flex-direction:column;height:100vh;min-height:420px;position:relative;overflow:hidden;background:linear-gradient(90deg,#d8d4cc,#f5f3f2 65%)}
.mid{flex:1;min-height:0;display:grid;grid-template-columns:22px minmax(0,1fr) 21px}
.left{background:#d4d0c8;padding:3px 3px 0 0}
.right{padding-top:3px;display:flex;flex-direction:column;gap:1px}
.center{display:flex;flex-direction:column;min-height:0;min-width:0}
.doc{flex:1;min-height:0;display:flex;flex-direction:column;border:1px solid #808080;border-width:1px 1px 1px 2px;padding-right:2px;background:#d4d0c8}
.panels{flex:1;min-height:0;display:grid;grid-template-columns:minmax(0,283fr) minmax(0,392fr) minmax(0,291fr);gap:5px;padding-bottom:2px}
.y{--fill:#fffce8}
footer{height:22px;background:#d4d0c8;padding:2px 9px 0;border-top:1px solid #dedbd5}
vs-bottom-tabs{margin-top:3px}`,
  `<vs-title></vs-title><vs-menu></vs-menu><vs-toolbar></vs-toolbar>
<div class="mid"><div class="left"><vs-side-tab side="left" icon="toolbox">工具箱</vs-side-tab></div>
<main class="center"><div class="doc"><vs-doc-header></vs-doc-header><vs-designer-tabs></vs-designer-tabs><vs-designer-bar></vs-designer-bar>
<div class="panels"><vs-panel heading="属性"><vs-tree></vs-tree></vs-panel><vs-panel class="y" heading="层次结构和级别"><vs-hierarchy></vs-hierarchy></vs-panel><vs-panel class="y" heading="数据源视图"><vs-source-table></vs-source-table></vs-panel></div></div>
<vs-bottom-tabs></vs-bottom-tabs></main>
<div class="right"><vs-side-tab side="right" icon="sol">解决方案资源管理器</vs-side-tab><vs-side-tab side="right" icon="deploy">部署进度</vs-side-tab><vs-side-tab side="right" icon="classview">类视图</vs-side-tab><vs-side-tab side="right" icon="propside">属性</vs-side-tab></div></div>
<footer>已保存的项</footer><vs-ime-bar></vs-ime-bar><vs-watermark></vs-watermark>`);
</script>
</body>
</html>
